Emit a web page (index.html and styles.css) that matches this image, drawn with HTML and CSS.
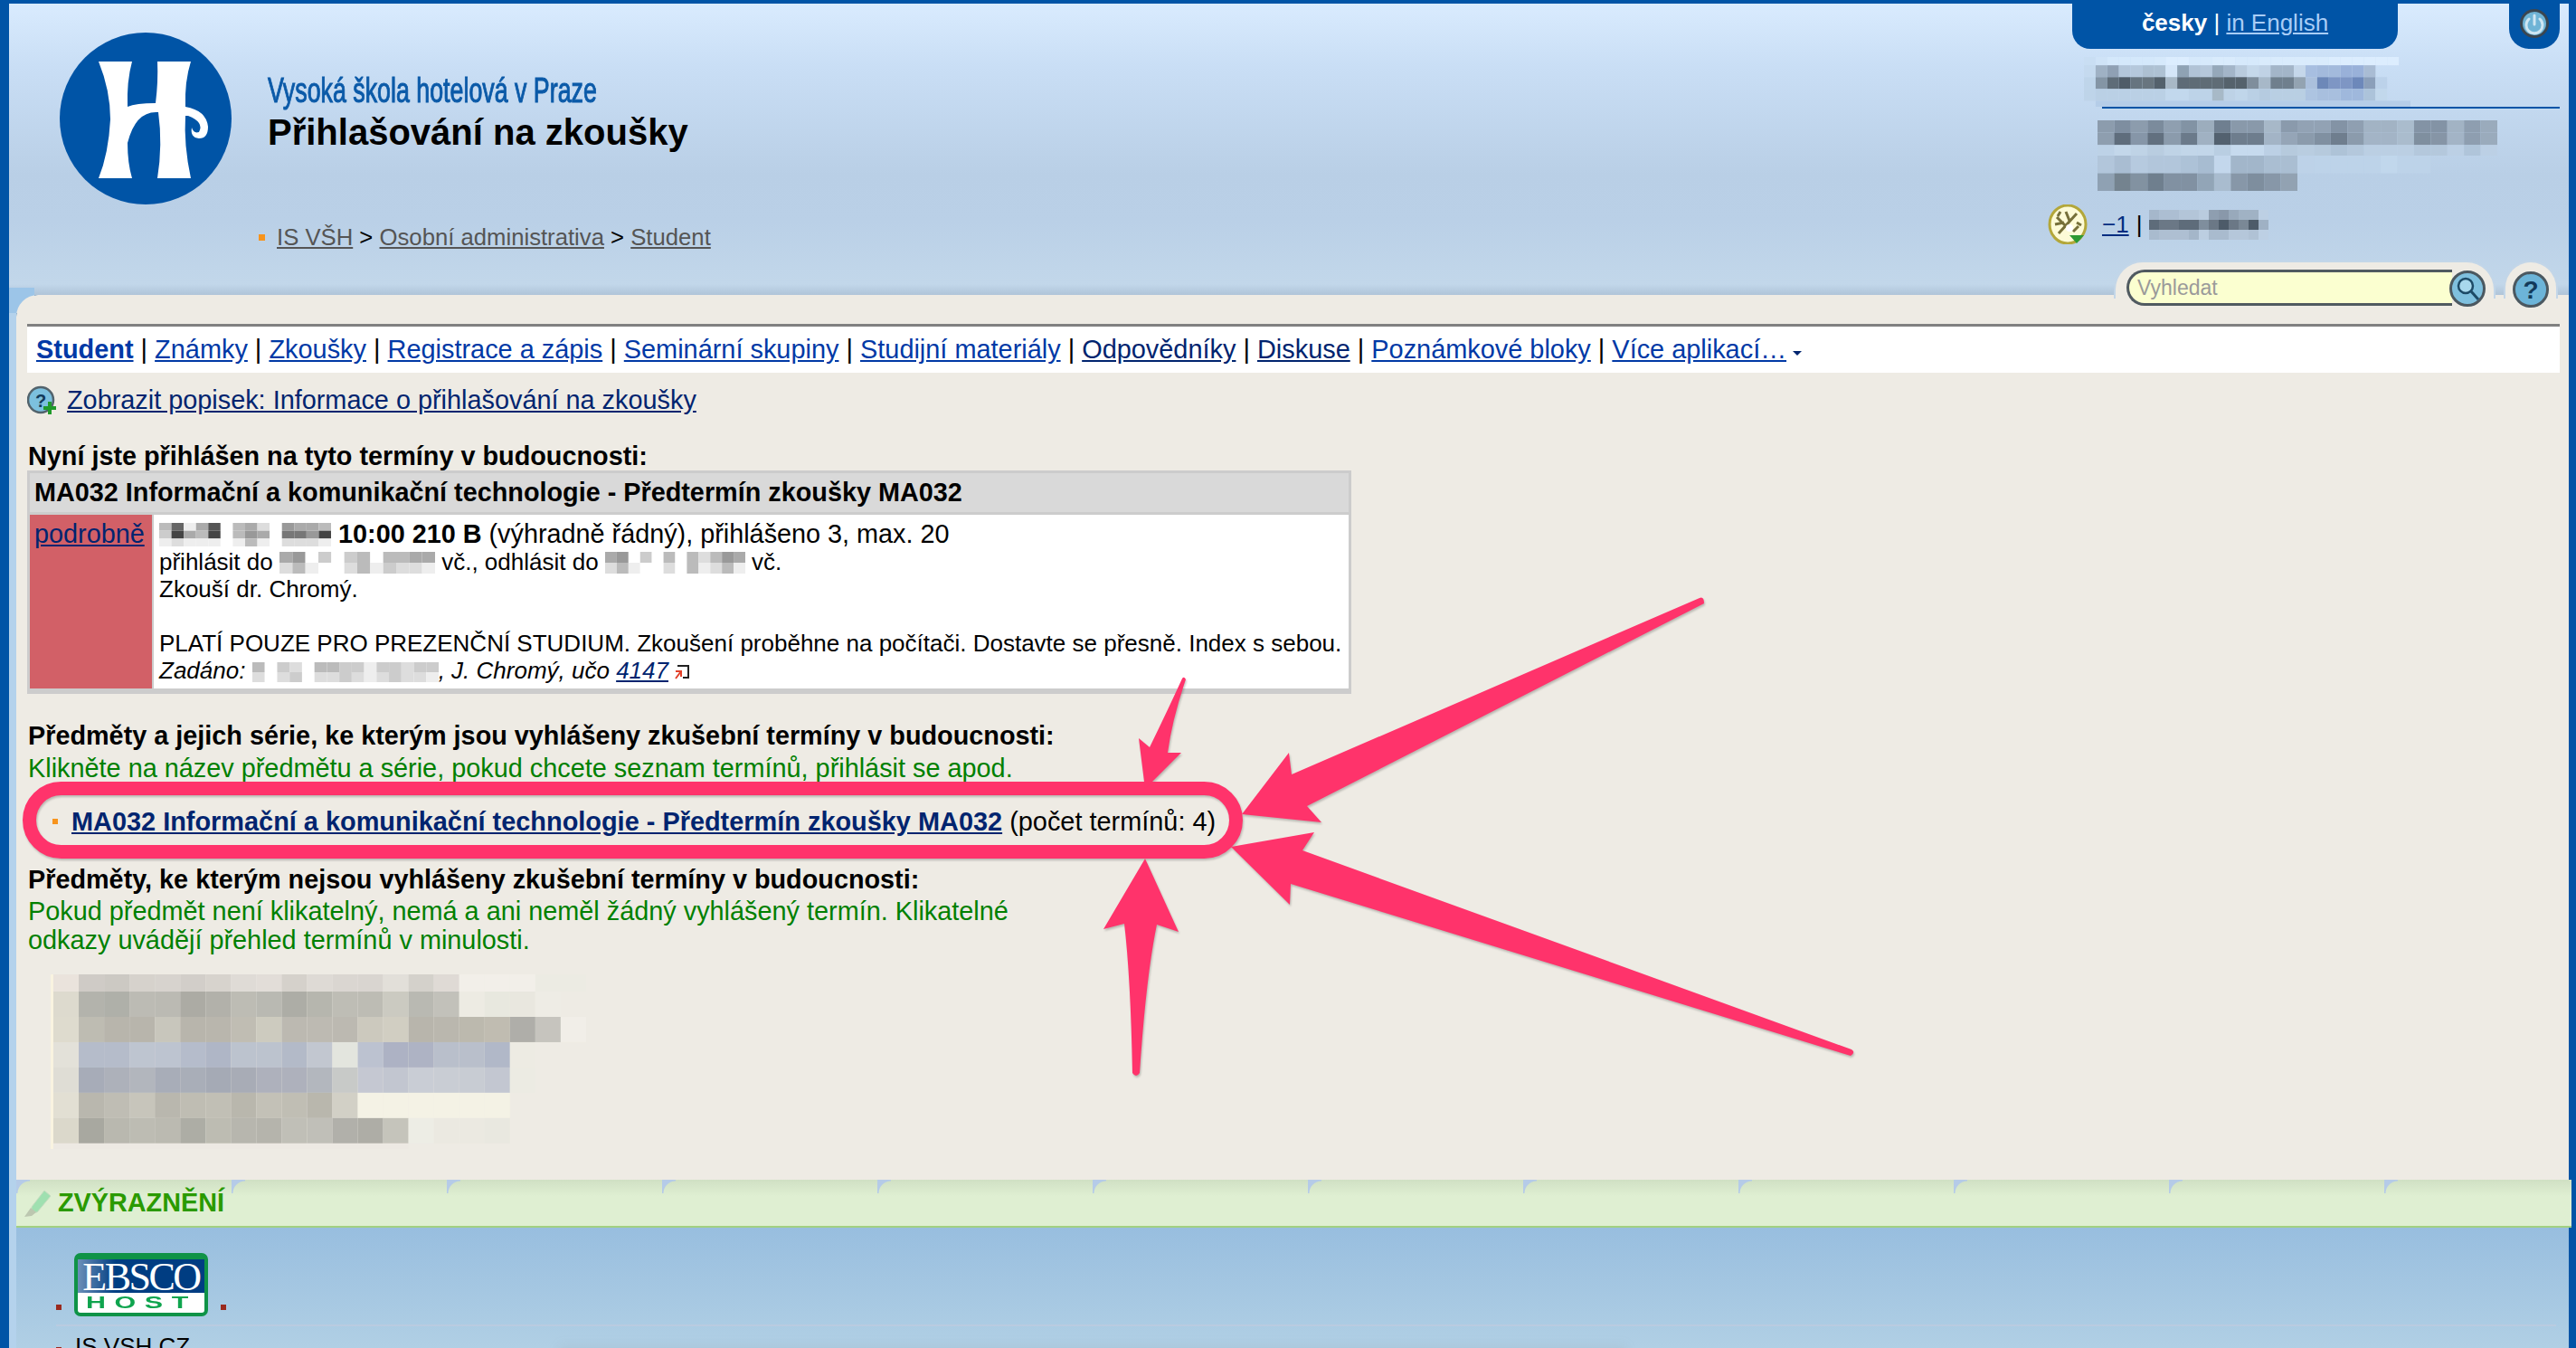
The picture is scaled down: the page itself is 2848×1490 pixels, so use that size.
FILE: index.html
```html
<!DOCTYPE html>
<html lang="cs">
<head>
<meta charset="utf-8">
<title>Přihlašování na zkoušky</title>
<link rel="stylesheet" href="styles.css">
</head>
<body>
<div class="frame">
  <header class="header">
    <div class="brand">
      <svg class="logo" viewBox="66 36 190 190"><ellipse cx="161" cy="131" rx="95" ry="95" fill="#0054a6"/><path fill="#fff" d="M109 68H146Q140 90 141 118Q150 114 172 114Q175 90 174 68H211Q204 90 205 118Q228 122 230 140Q230 153 220 153Q210 152 212 141Q214 148 220 146Q226 135 208 128L205 128Q203 160 211 197H174Q180 160 175 124Q150 122 141 158Q141 180 146 197H109Q120 170 122 132Q122 100 109 68Z"/></svg>
      <div class="brand-text">
        <div class="school"><span class="school-name">Vysoká škola hotelová v Praze</span></div>
        <h1 class="title">Přihlašování na zkoušky</h1>
        <div class="crumbs"><i class="crumb-dot"></i><a href="#">IS VŠH</a> &gt; <a href="#">Osobní administrativa</a> &gt; <a href="#">Student</a></div>
      </div>
    </div>
    <div class="aside">
      <div class="tabs">
        <div class="lang"><b>česky</b> | <a href="#">in English</a></div>
        <div class="power"><svg width="32" height="32" viewBox="0 0 32 32"><circle cx="16" cy="16" r="14.5" fill="#6fb4d6" stroke="#3b4650" stroke-width="3"/><path d="M10 11a9 9 0 1 0 12 0M16 7v10" fill="none" stroke="#cfe6f2" stroke-width="3" stroke-linecap="round"/></svg></div>
      </div>
      <svg class="mosaic m-user" viewBox="0 0 28 4.2" preserveAspectRatio="none">
        <g transform="translate(0,0) scale(1,.7)"><rect x="0" fill="#c9def3"/><rect x="1" fill="#cfe3f7"/><rect x="2" fill="#d4e8fb"/><rect x="3" fill="#d4e8fb"/><rect x="4" fill="#d4e8fb"/><rect x="5" fill="#d4e8fb"/><rect x="6" fill="#d6e9fb"/><rect x="7" fill="#dcedfe"/><rect x="8" fill="#dcedfe"/><rect x="9" fill="#d6e9fb"/><rect x="10" fill="#d6e9fb"/><rect x="11" fill="#d9ebfc"/><rect x="12" fill="#d9ebfc"/><rect x="13" fill="#d6e9fb"/><rect x="14" fill="#d6e9fb"/><rect x="15" fill="#d9ebfc"/><rect x="16" fill="#d9ebfc"/><rect x="17" fill="#d9ebfc"/><rect x="18" fill="#d9ebfc"/><rect x="19" fill="#d9ebfc"/><rect x="20" fill="#d9ebfc"/><rect x="21" fill="#dcedfe"/><rect x="22" fill="#dcedfe"/><rect x="23" fill="#dcedfe"/><rect x="24" fill="#dcedfe"/><rect x="25" fill="#dcedfe"/><rect x="26" fill="#dcedfe"/></g>
        <g transform="translate(0,.7)"><rect x="0" fill="#c5daef"/><rect x="1" fill="#9fb1c4"/><rect x="2" fill="#8fa0b4"/><rect x="3" fill="#b3c6da"/><rect x="4" fill="#b5c8dc"/><rect x="5" fill="#adc0d2"/><rect x="6" fill="#aec1d3"/><rect x="7" fill="#d5e6f8"/><rect x="8" fill="#8fa2b4"/><rect x="9" fill="#b1c3d6"/><rect x="10" fill="#b5c7da"/><rect x="11" fill="#95a8ba"/><rect x="12" fill="#a3b5c8"/><rect x="13" fill="#b9cbdd"/><rect x="14" fill="#c5d8ea"/><rect x="15" fill="#c0d2e5"/><rect x="16" fill="#a3b5c8"/><rect x="17" fill="#a3b5c8"/><rect x="18" fill="#c5d7ea"/><rect x="19" fill="#a7bee0"/><rect x="20" fill="#a3badc"/><rect x="21" fill="#a3badc"/><rect x="22" fill="#99b1d9"/><rect x="23" fill="#99b1d9"/><rect x="24" fill="#a9bcd4"/></g>
        <g transform="translate(0,1.7)"><rect x="0" fill="#bfd5ea"/><rect x="1" fill="#8495a5"/><rect x="2" fill="#5e6c78"/><rect x="3" fill="#4f5c68"/><rect x="4" fill="#66747f"/><rect x="5" fill="#68757f"/><rect x="6" fill="#54616c"/><rect x="7" fill="#a8b8c6"/><rect x="8" fill="#5e6b77"/><rect x="9" fill="#5f6c76"/><rect x="10" fill="#5f6c76"/><rect x="11" fill="#5f6c76"/><rect x="12" fill="#55626c"/><rect x="13" fill="#55626c"/><rect x="14" fill="#7f8e9c"/><rect x="15" fill="#a7b8c8"/><rect x="16" fill="#6f7f8d"/><rect x="17" fill="#6f7f8d"/><rect x="18" fill="#93a3b1"/><rect x="19" fill="#abc0dc"/><rect x="20" fill="#6d88b8"/><rect x="21" fill="#7e96c4"/><rect x="22" fill="#7e96c4"/><rect x="23" fill="#6d88ba"/><rect x="24" fill="#8b9fba"/><rect x="25" fill="#bcd2ea"/></g>
        <g transform="translate(0,2.7)"><rect x="0" fill="#bed4e9"/><rect x="1" fill="#bad0e5"/><rect x="2" fill="#bad0e5"/><rect x="3" fill="#bad0e5"/><rect x="4" fill="#bad0e5"/><rect x="5" fill="#bad0e5"/><rect x="6" fill="#bad0e5"/><rect x="7" fill="#c2d8ed"/><rect x="8" fill="#c2d8ed"/><rect x="9" fill="#bdd3e8"/><rect x="10" fill="#bdd3e8"/><rect x="11" fill="#a7b9c7"/><rect x="12" fill="#bdd2e6"/><rect x="13" fill="#c0d6ea"/><rect x="14" fill="#bad0e5"/><rect x="15" fill="#b5cbe0"/><rect x="16" fill="#b9cfe3"/><rect x="17" fill="#b9cfe3"/><rect x="18" fill="#b9cfe3"/><rect x="19" fill="#adc4e1"/><rect x="20" fill="#a8bfde"/><rect x="21" fill="#a8bfde"/><rect x="22" fill="#9fb8dc"/><rect x="23" fill="#9fb8dc"/><rect x="24" fill="#acc3da"/><rect x="25" fill="#c2d8ec"/></g>
        <g transform="translate(1,3.7) scale(27,.5)"><rect x="0" fill="#b5cde8"/></g>
      </svg>
      <div class="rule"></div>
      <svg class="mosaic m-study" viewBox="0 0 24 4" preserveAspectRatio="none">
        <g transform="scale(1,.7)"><rect x="0" fill="#8c9cad"/><rect x="1" fill="#7e8ea0"/><rect x="2" fill="#8c9cad"/><rect x="3" fill="#7b8b9c"/><rect x="4" fill="#8f9fb0"/><rect x="5" fill="#8293a4"/><rect x="6" fill="#9cadbd"/><rect x="7" fill="#6f7f90"/><rect x="8" fill="#8999aa"/><rect x="9" fill="#8999aa"/><rect x="10" fill="#a7b8c8"/><rect x="11" fill="#8a9aac"/><rect x="12" fill="#92a2b4"/><rect x="13" fill="#92a2b4"/><rect x="14" fill="#8393a5"/><rect x="15" fill="#8f9fb1"/><rect x="16" fill="#a2b3c4"/><rect x="17" fill="#a2b3c4"/><rect x="18" fill="#aabccd"/><rect x="19" fill="#8393a5"/><rect x="20" fill="#8393a5"/><rect x="21" fill="#a2b3c4"/><rect x="22" fill="#8e9eb0"/><rect x="23" fill="#9aabbc"/></g>
        <g transform="translate(0,.7) scale(1,.7)"><rect x="0" fill="#8e9eaf"/><rect x="1" fill="#5f6d7c"/><rect x="2" fill="#8696a8"/><rect x="3" fill="#62707f"/><rect x="4" fill="#8b9bac"/><rect x="5" fill="#6b7a8a"/><rect x="6" fill="#a0b1c2"/><rect x="7" fill="#53616f"/><rect x="8" fill="#6e7d8d"/><rect x="9" fill="#6e7d8d"/><rect x="10" fill="#a3b4c6"/><rect x="11" fill="#95a5b7"/><rect x="12" fill="#8b9bac"/><rect x="13" fill="#8090a1"/><rect x="14" fill="#6f7e8e"/><rect x="15" fill="#8b9bac"/><rect x="16" fill="#a3b4c6"/><rect x="17" fill="#a3b4c6"/><rect x="18" fill="#aabccd"/><rect x="19" fill="#7f8f9f"/><rect x="20" fill="#8695a6"/><rect x="21" fill="#a3b4c6"/><rect x="22" fill="#8e9eb0"/><rect x="23" fill="#9aabbc"/></g>
        <g transform="translate(0,1.4) scale(1,.6)"><rect x="0" fill="#bdd2e7"/><rect x="1" fill="#c3d7ea"/><rect x="2" fill="#bfd3e6"/><rect x="3" fill="#b9cde0"/><rect x="4" fill="#bfd3e6"/><rect x="5" fill="#c2d6e9"/><rect x="6" fill="#c2d6e9"/><rect x="7" fill="#b9cee2"/><rect x="8" fill="#c6daee"/><rect x="9" fill="#c6daee"/><rect x="10" fill="#bcd0e5"/><rect x="11" fill="#b6cadd"/><rect x="12" fill="#b9cde0"/><rect x="13" fill="#b6cadd"/><rect x="14" fill="#aec3d7"/><rect x="15" fill="#b4c8dc"/><rect x="16" fill="#bbcfe3"/><rect x="17" fill="#bbcfe3"/><rect x="18" fill="#bbcfe3"/><rect x="19" fill="#b4c8dc"/><rect x="20" fill="#b4c8dc"/><rect x="21" fill="#bcd0e5"/><rect x="22" fill="#b0c5da"/><rect x="23" fill="#bcd0e5"/></g>
        <g transform="translate(0,2)"><rect x="0" fill="#b2c6db"/><rect x="1" fill="#a9bdd2"/><rect x="2" fill="#b6cadf"/><rect x="3" fill="#b2c6db"/><rect x="4" fill="#b2c6db"/><rect x="5" fill="#adc2d7"/><rect x="6" fill="#a7bcd1"/><rect x="7" fill="#c3d7ec"/><rect x="8" fill="#a2b6ca"/><rect x="9" fill="#a2b6ca"/><rect x="10" fill="#aabed2"/><rect x="11" fill="#aabed2"/><rect x="12" fill="#bdd2e8"/><rect x="13" fill="#bdd3e9"/><rect x="14" fill="#bdd3e9"/><rect x="15" fill="#bdd3e9"/><rect x="16" fill="#bdd3e9"/><rect x="17" fill="#c1d7ec"/><rect x="18" fill="#bdd3e9"/><rect x="19" fill="#bdd3e9"/></g>
        <g transform="translate(0,3)"><rect x="0" fill="#8fa1b3"/><rect x="1" fill="#74838f"/><rect x="2" fill="#8292a1"/><rect x="3" fill="#6f7f8e"/><rect x="4" fill="#8191a2"/><rect x="5" fill="#8191a2"/><rect x="6" fill="#92a5b7"/><rect x="7" fill="#a9bccf"/><rect x="8" fill="#8797a8"/><rect x="9" fill="#7e8e9e"/><rect x="10" fill="#8797a8"/><rect x="11" fill="#92a2b2"/></g>
      </svg>
      <div class="notice">
        <svg class="term-icon" width="44" height="44" viewBox="0 0 44 44"><ellipse cx="22" cy="22" rx="20" ry="21" fill="#fdfbd7" stroke="#b3a73a" stroke-width="3"/><path d="M12 32 32 10M10 14l10 10M20 8l4 10M8 22l10-2M28 30l6-6M14 8l-3 5M32 20l5 3" stroke="#76703a" stroke-width="3" fill="none"/><circle cx="24" cy="26" r="4" fill="#fff"/><path d="M24 34h16l-8 9z" fill="#2d9a32"/></svg>
        <a href="#">−1</a><span class="pipe">|</span>
        <svg class="mosaic m-user2" viewBox="0 0 12 3" preserveAspectRatio="none">
          <g><rect x="0" fill="#a5b7cb"/><rect x="1" fill="#acbed2"/><rect x="2" fill="#acbed2"/><rect x="3" fill="#b3c5d8"/><rect x="4" fill="#b3c5d8"/><rect x="5" fill="#b9cbde"/><rect x="6" fill="#8e9eb0"/><rect x="7" fill="#8998aa"/><rect x="8" fill="#98a9bb"/><rect x="9" fill="#a0b2c4"/><rect x="10" fill="#a0b2c4"/><rect x="11" fill="#bdd0e4"/></g>
          <g transform="translate(0,1)"><rect x="0" fill="#5e6c7a"/><rect x="1" fill="#6b7886"/><rect x="2" fill="#6b7886"/><rect x="3" fill="#5e6c7a"/><rect x="4" fill="#5e6c7a"/><rect x="5" fill="#7f8e9d"/><rect x="6" fill="#6b7886"/><rect x="7" fill="#4d5b69"/><rect x="8" fill="#6b7886"/><rect x="9" fill="#7a8896"/><rect x="10" fill="#4d5b69"/><rect x="11" fill="#9fb1c4"/></g>
          <g transform="translate(0,2)"><rect x="0" fill="#a9bbce"/><rect x="1" fill="#aebfd2"/><rect x="2" fill="#aebfd2"/><rect x="3" fill="#aebfd2"/><rect x="4" fill="#a4b6c9"/><rect x="5" fill="#bccee1"/><rect x="6" fill="#a9bbce"/><rect x="7" fill="#a9bbce"/><rect x="8" fill="#b5c7da"/><rect x="9" fill="#b5c7da"/><rect x="10" fill="#b0c2d5"/><rect x="11" fill="#bdd0e4"/></g>
        </svg>
      </div>
    </div>
  </header>

  <div class="panel-shell">
  <main class="panel">
    <div class="tools">
      <div class="search-tab">
        <div class="search-box">Vyhledat</div>
        <svg class="round-btn" width="40" height="40" viewBox="0 0 40 40"><circle cx="20" cy="20" r="18.5" fill="#7fc0de" stroke="#4b5860" stroke-width="3"/><circle cx="18" cy="17" r="8" fill="#a8d8ec" stroke="#1d4a66" stroke-width="2.5"/><path d="M24 23l8 9" stroke="#1d4a66" stroke-width="3"/></svg>
      </div>
      <div class="help-tab"><svg width="40" height="40" viewBox="0 0 40 40"><circle cx="20" cy="20" r="18.5" fill="#6cb4d8" stroke="#4b5860" stroke-width="3"/><text x="20" y="30" class="help-q">?</text></svg></div>
    </div>
    <nav class="nav">
      <a href="#"><b>Student</b></a> | <a href="#">Známky</a> | <a href="#">Zkoušky</a> | <a href="#">Registrace a zápis</a> | <a href="#">Seminární skupiny</a> | <a href="#">Studijní materiály</a> | <a class="dark" href="#">Odpovědníky</a> | <a class="dark" href="#">Diskuse</a> | <a href="#">Poznámkové bloky</a> | <a href="#">Více aplikací…</a><i class="caret"></i>
    </nav>
    <div class="show-help">
      <svg width="32" height="32" viewBox="0 0 32 32"><circle cx="15" cy="16" r="14" fill="#7cc0de" stroke="#52636c" stroke-width="2.5"/><text x="15" y="24" class="help-q small">?</text><path d="M25 18v14M18 25h14" stroke="#1f9a2a" stroke-width="4"/></svg>
      <a href="#">Zobrazit popisek: Informace o přihlašování na zkoušky</a>
    </div>

    <h2 class="h-first">Nyní jste přihlášen na tyto termíny v budoucnosti:</h2>
    <div class="exam">
      <div class="exam-head">MA032 Informační a komunikační technologie - Předtermín zkoušky MA032</div>
      <div class="exam-row">
        <div class="exam-side"><a href="#">podrobně</a></div>
        <div class="exam-body">
          <div class="line-big"><svg class="mosaic blur-date" viewBox="0 0 14 3" preserveAspectRatio="none">
            <g><rect x="0" fill="#bbb"/><rect x="1" fill="#666"/><rect x="2" fill="#eee"/><rect x="3" fill="#aaa"/><rect x="4" fill="#555"/><rect x="5" fill="#fff"/><rect x="6" fill="#bbb"/><rect x="7" fill="#aaa"/><rect x="8" fill="#ddd"/><rect x="9" fill="#fff"/><rect x="10" fill="#999"/><rect x="11" fill="#aaa"/><rect x="12" fill="#aaa"/><rect x="13" fill="#bbb"/></g>
            <g transform="translate(0,1)"><rect x="0" fill="#ccc"/><rect x="1" fill="#444"/><rect x="2" fill="#aaa"/><rect x="3" fill="#bbb"/><rect x="4" fill="#444"/><rect x="5" fill="#fff"/><rect x="6" fill="#bbb"/><rect x="7" fill="#999"/><rect x="8" fill="#aaa"/><rect x="9" fill="#fff"/><rect x="10" fill="#777"/><rect x="11" fill="#777"/><rect x="12" fill="#999"/><rect x="13" fill="#444"/></g>
            <g transform="translate(0,2)"><rect x="0" fill="#eee"/><rect x="1" fill="#ddd"/><rect x="2" fill="#eee"/><rect x="3" fill="#eee"/><rect x="4" fill="#eee"/><rect x="5" fill="#fff"/><rect x="6" fill="#eee"/><rect x="7" fill="#bbb"/><rect x="8" fill="#eee"/><rect x="9" fill="#fff"/><rect x="10" fill="#ddd"/><rect x="11" fill="#ddd"/><rect x="12" fill="#ddd"/><rect x="13" fill="#eee"/></g>
          </svg> <b>10:00 210 B</b> (výhradně řádný), přihlášeno 3, max. 20</div>
          <div>přihlásit do <svg class="mosaic blur-small" viewBox="0 0 12 2" preserveAspectRatio="none">
            <g><rect x="0" fill="#aaa"/><rect x="1" fill="#999"/><rect x="2" fill="#fff"/><rect x="3" fill="#ccc"/><rect x="4" fill="#fff"/><rect x="5" fill="#ccc"/><rect x="6" fill="#bbb"/><rect x="7" fill="#fff"/><rect x="8" fill="#bbb"/><rect x="9" fill="#bbb"/><rect x="10" fill="#aaa"/><rect x="11" fill="#aaa"/></g>
            <g transform="translate(0,1)"><rect x="0" fill="#ddd"/><rect x="1" fill="#bbb"/><rect x="2" fill="#eee"/><rect x="3" fill="#fff"/><rect x="4" fill="#fff"/><rect x="5" fill="#ddd"/><rect x="6" fill="#bbb"/><rect x="7" fill="#eee"/><rect x="8" fill="#ccc"/><rect x="9" fill="#ddd"/><rect x="10" fill="#ddd"/><rect x="11" fill="#eee"/></g>
          </svg> vč., odhlásit do <svg class="mosaic blur-small2" viewBox="0 0 12 2" preserveAspectRatio="none">
            <g><rect x="0" fill="#aaa"/><rect x="1" fill="#999"/><rect x="2" fill="#fff"/><rect x="3" fill="#ccc"/><rect x="4" fill="#fff"/><rect x="5" fill="#bbb"/><rect x="6" fill="#fff"/><rect x="7" fill="#bbb"/><rect x="8" fill="#ddd"/><rect x="9" fill="#bbb"/><rect x="10" fill="#999"/><rect x="11" fill="#aaa"/></g>
            <g transform="translate(0,1)"><rect x="0" fill="#ddd"/><rect x="1" fill="#bbb"/><rect x="2" fill="#eee"/><rect x="3" fill="#fff"/><rect x="4" fill="#fff"/><rect x="5" fill="#ddd"/><rect x="6" fill="#fff"/><rect x="7" fill="#bbb"/><rect x="8" fill="#eee"/><rect x="9" fill="#ddd"/><rect x="10" fill="#bbb"/><rect x="11" fill="#eee"/></g>
          </svg> vč.</div>
          <div>Zkouší dr. Chromý.</div>
          <div class="blank"></div>
          <div>PLATÍ POUZE PRO PREZENČNÍ STUDIUM. Zkoušení proběhne na počítači. Dostavte se přesně. Index s sebou.</div>
          <div class="assigned"><i>Zadáno: <svg class="mosaic blur-zad" viewBox="0 0 15 2" preserveAspectRatio="none">
            <g><rect x="0" fill="#bbb"/><rect x="1" fill="#fff"/><rect x="2" fill="#ccc"/><rect x="3" fill="#ddd"/><rect x="4" fill="#fff"/><rect x="5" fill="#bbb"/><rect x="6" fill="#bbb"/><rect x="7" fill="#ccc"/><rect x="8" fill="#ccc"/><rect x="9" fill="#eee"/><rect x="10" fill="#ccc"/><rect x="11" fill="#ccc"/><rect x="12" fill="#ddd"/><rect x="13" fill="#ccc"/><rect x="14" fill="#ccc"/></g>
            <g transform="translate(0,1)"><rect x="0" fill="#ddd"/><rect x="1" fill="#fff"/><rect x="2" fill="#ddd"/><rect x="3" fill="#ccc"/><rect x="4" fill="#fff"/><rect x="5" fill="#ddd"/><rect x="6" fill="#ddd"/><rect x="7" fill="#ccc"/><rect x="8" fill="#ddd"/><rect x="9" fill="#eee"/><rect x="10" fill="#ddd"/><rect x="11" fill="#ccc"/><rect x="12" fill="#ddd"/><rect x="13" fill="#ddd"/><rect x="14" fill="#eee"/></g>
          </svg>, J. Chromý, učo <a href="#">4147</a></i> <svg class="ext" width="18" height="17" viewBox="0 0 18 17"><path d="M3 1h12v13H9" fill="none" stroke="#222" stroke-width="2"/><path d="M1 7l6 0 0 6M7 7l-6 8" fill="none" stroke="#e2412a" stroke-width="2"/></svg></div>
        </div>
      </div>
    </div>

    <h2 class="h-second">Předměty a jejich série, ke kterým jsou vyhlášeny zkušební termíny v budoucnosti:</h2>
    <p class="hint hint-open">Klikněte na název předmětu a série, pokud chcete seznam termínů, přihlásit se apod.</p>
    <div class="course"><i class="course-dot"></i><a href="#"><b>MA032 Informační a komunikační technologie - Předtermín zkoušky MA032</b></a> (počet termínů: 4)</div>
    <h2 class="h-third">Předměty, ke kterým nejsou vyhlášeny zkušební termíny v budoucnosti:</h2>
    <p class="hint hint-closed">Pokud předmět není klikatelný, nemá a ani neměl žádný vyhlášený termín. Klikatelné<br>odkazy uvádějí přehled termínů v minulosti.</p>

    <svg class="mosaic m-courses" viewBox="0 0 22 6.9" preserveAspectRatio="none">
      <g transform="scale(1,.68)"><rect x="0" fill="#eae3dc"/><rect x="1" fill="#cfcbc6"/><rect x="2" fill="#ccc9c3"/><rect x="3" fill="#d6d2cc"/><rect x="4" fill="#d7d3ce"/><rect x="5" fill="#d2cec9"/><rect x="6" fill="#d7d3cd"/><rect x="7" fill="#dfdbd6"/><rect x="8" fill="#e2ddd8"/><rect x="9" fill="#d5d1cb"/><rect x="10" fill="#dedad5"/><rect x="11" fill="#dad6d1"/><rect x="12" fill="#d9d5d0"/><rect x="13" fill="#e2dfd9"/><rect x="14" fill="#d4d1cb"/><rect x="15" fill="#dfdad5"/><rect x="16" fill="#f2efe9"/><rect x="17" fill="#f2efe9"/><rect x="18" fill="#f2efe9"/><rect x="19" fill="#ecebe3"/><rect x="20" fill="#ecebe3"/></g>
      <g transform="translate(0,.68)"><rect x="0" fill="#dddace"/><rect x="1" fill="#b3b3ac"/><rect x="2" fill="#afb0a9"/><rect x="3" fill="#bcbbb4"/><rect x="4" fill="#bbbab3"/><rect x="5" fill="#acaba4"/><rect x="6" fill="#b2b1aa"/><rect x="7" fill="#bdbcb4"/><rect x="8" fill="#b9b9b2"/><rect x="9" fill="#adada6"/><rect x="10" fill="#b6b6ae"/><rect x="11" fill="#bebdb5"/><rect x="12" fill="#bdbcb4"/><rect x="13" fill="#cbcac1"/><rect x="14" fill="#b9b9b2"/><rect x="15" fill="#c2c1ba"/><rect x="16" fill="#edebe3"/><rect x="17" fill="#e8e8df"/><rect x="18" fill="#e9e7df"/><rect x="19" fill="#eeece5"/></g>
      <g transform="translate(0,1.68)"><rect x="0" fill="#dedbce"/><rect x="1" fill="#bebcb2"/><rect x="2" fill="#b8b5ac"/><rect x="3" fill="#b8b5ac"/><rect x="4" fill="#c8c6bc"/><rect x="5" fill="#b8b5ac"/><rect x="6" fill="#b9b6ad"/><rect x="7" fill="#c0bdb3"/><rect x="8" fill="#cdcbbf"/><rect x="9" fill="#bcb9b1"/><rect x="10" fill="#bdbab2"/><rect x="11" fill="#bcb9b1"/><rect x="12" fill="#ccc9be"/><rect x="13" fill="#d1cec2"/><rect x="14" fill="#b8b5ac"/><rect x="15" fill="#bab7ae"/><rect x="16" fill="#bcb9ae"/><rect x="17" fill="#c0bcb1"/><rect x="18" fill="#afaea9"/><rect x="19" fill="#c6c4be"/><rect x="20" fill="#f1eee8"/></g>
      <g transform="translate(0,2.68)"><rect x="0" fill="#e3e1d9"/><rect x="1" fill="#b5bcca"/><rect x="2" fill="#b5bcca"/><rect x="3" fill="#bec5d0"/><rect x="4" fill="#bdc4d0"/><rect x="5" fill="#b5bccb"/><rect x="6" fill="#afb6c6"/><rect x="7" fill="#bcc3ce"/><rect x="8" fill="#bcc3ce"/><rect x="9" fill="#b3bac8"/><rect x="10" fill="#c2c7d0"/><rect x="11" fill="#e3e5de"/><rect x="12" fill="#bcc2d0"/><rect x="13" fill="#adb2c4"/><rect x="14" fill="#aeb3c4"/><rect x="15" fill="#b9bfcb"/><rect x="16" fill="#b9bfcb"/><rect x="17" fill="#b1b8c8"/><rect x="18" fill="#edebe3"/></g>
      <g transform="translate(0,3.68)"><rect x="0" fill="#dfddd5"/><rect x="1" fill="#a7acb8"/><rect x="2" fill="#adb1ba"/><rect x="3" fill="#b2b6bd"/><rect x="4" fill="#a8adb8"/><rect x="5" fill="#a9aeb8"/><rect x="6" fill="#a5aab5"/><rect x="7" fill="#a8acb6"/><rect x="8" fill="#aeb1bc"/><rect x="9" fill="#aeb1bc"/><rect x="10" fill="#b3b7be"/><rect x="11" fill="#c8cac8"/><rect x="12" fill="#c5c8d2"/><rect x="13" fill="#c2c6d0"/><rect x="14" fill="#c9cdd5"/><rect x="15" fill="#c9cdd4"/><rect x="16" fill="#c8ccd3"/><rect x="17" fill="#c3c7d1"/><rect x="18" fill="#ecebe3"/></g>
      <g transform="translate(0,4.68)"><rect x="0" fill="#e2dfd3"/><rect x="1" fill="#b9b7ae"/><rect x="2" fill="#bfbdb4"/><rect x="3" fill="#c7c5bb"/><rect x="4" fill="#b9b7ae"/><rect x="5" fill="#bfbdb3"/><rect x="6" fill="#c1bfb5"/><rect x="7" fill="#b9b7ad"/><rect x="8" fill="#c3c1b7"/><rect x="9" fill="#c0beb4"/><rect x="10" fill="#b9b7ad"/><rect x="11" fill="#d2d0c6"/><rect x="12" fill="#f4f2e5"/><rect x="13" fill="#f4f2e5"/><rect x="14" fill="#f4f2e5"/><rect x="15" fill="#f4f2e5"/><rect x="16" fill="#f4f2e5"/><rect x="17" fill="#f4f2e5"/></g>
      <g transform="translate(0,5.68)"><rect x="0" fill="#dbd8cb"/><rect x="1" fill="#a8a8a0"/><rect x="2" fill="#b9b8af"/><rect x="3" fill="#bdbcb3"/><rect x="4" fill="#bbbab1"/><rect x="5" fill="#adada5"/><rect x="6" fill="#bdbcb2"/><rect x="7" fill="#b7b6ae"/><rect x="8" fill="#b5b4ac"/><rect x="9" fill="#c0bfb7"/><rect x="10" fill="#c0bfb8"/><rect x="11" fill="#b1b0aa"/><rect x="12" fill="#aeada6"/><rect x="13" fill="#c5c4bb"/><rect x="14" fill="#edede5"/><rect x="15" fill="#ebe9e1"/><rect x="16" fill="#ebe9e1"/><rect x="17" fill="#e9e8e0"/></g>
      <g transform="translate(0,6.68) scale(14,.22)"><rect x="0" fill="#ede9e3"/></g>
    </svg>
  </main>
  </div>

  <section class="highlights">
    <div class="notches"><i></i><i></i><i></i><i></i><i></i><i></i><i></i><i></i><i></i><i></i><i></i><i></i></div>
    <svg class="pen" width="32" height="32" viewBox="0 0 32 32"><path d="M10 20 24 2l7 6-15 18-6 0z" fill="#9fe0b0" stroke="#c5dcc0"/><path d="M9 21l6 5-5 4-8 1z" fill="#bcc7b0"/></svg>
    <span>ZVÝRAZNĚNÍ</span>
  </section>

  <footer class="footer">
    <div class="foot-row first">
      <i class="bullet"></i>
      <div class="ebsco"><div class="ebsco-top">EBSCO</div><div class="ebsco-bottom">HOST</div></div>
      <i class="bullet"></i>
    </div>
    <div class="foot-row second"><i class="bullet"></i><span>IS VSH CZ</span></div>
    <div class="foot-shade"></div>
  </footer>
</div>

<svg class="annotations" width="2848" height="1490" viewBox="0 0 2848 1490">
  <rect x="32.5" y="871.5" width="1334" height="70" rx="35" ry="35" fill="none" stroke="#ff336b" stroke-width="15"/>
  <path fill="#ff336b" d="M1307 750Q1309 747 1311 751Q1296 795 1291 832L1306 832 1266 872 1259 816 1271 826Q1291 785 1307 750Z"/>
  <path fill="#ff336b" d="M1879 661Q1884 659 1884 667L1445 891 1461 909 1373 900 1425 832 1428 856Z"/>
  <path fill="#ff336b" d="M2047 1160Q2052 1163 2046 1167L1427 977 1426 1000 1361 936 1453 920 1440 940Z"/>
  <path fill="#ff336b" d="M1266 949 1303 1030 1279 1022Q1267 1080 1260 1186 1256 1192 1252 1186 1250 1080 1243 1021L1220 1027Z"/>
</svg>
</body>
</html>
```

FILE: styles.css
```css
* { box-sizing: border-box; }
html, body { margin: 0; height: 100%; overflow: hidden; }
body { background: #0054a6; font-family: "Liberation Sans", Arial, sans-serif; color: #000; position: relative; }
a { color: inherit; }
h1, h2, p { margin: 0; }

.frame {
  height: 1490px; padding: 4px 8px 0 10px;
  display: flex; flex-direction: column;
  background: linear-gradient(#b4d2ec, #b4d2ec) 10px 330px / 8px 100% no-repeat, #0054a6;
}

/* header */
.header {
  height: 322px; flex: none; display: flex; justify-content: space-between;
  background: linear-gradient(#d9ebfe 0, #c9def5 70px, #b9cfe6 190px, #bad0e7 240px, #c2d7ea 310px, #afc4d8 322px);
}
.brand { display: flex; padding: 32px 0 0 56px; gap: 40px; }
.logo { width: 190px; height: 190px; }
.brand-text { display: flex; flex-direction: column; padding-top: 44px; }
.school { height: 40px; line-height: 40px; }
.school-name { display: inline-block; font-family: "Liberation Sans", sans-serif; font-size: 38px; color: #0b5aa8; -webkit-text-stroke: 1px #0b5aa8; transform: scaleX(.705); transform-origin: 0 50%; white-space: nowrap; }
.title { font-size: 40px; line-height: 46px; font-weight: 700; margin-top: 3px; white-space: nowrap; }
.crumbs { margin-top: 77px; margin-left: -10px; font-size: 25.7px; line-height: 32px; display: flex; align-items: center; white-space: pre; }
.crumbs a { color: #555; }
.crumb-dot { width: 7px; height: 7px; background: #f7941d; margin-right: 13px; }

.aside { width: 560px; display: flex; flex-direction: column; }
.tabs { display: flex; padding-left: 11px; height: 50px; flex: none; }
.lang { width: 360px; height: 50px; background: #0054a6; border-radius: 0 0 20px 20px; color: #fff; font-size: 26px; line-height: 42px; text-align: center; }
.lang a { color: #a9cdf6; }
.power { width: 56px; height: 50px; margin-left: 123px; background: #0054a6; border-radius: 0 0 22px 22px; display: flex; justify-content: center; padding-top: 6px; }

.mosaic { display: block; }
.mosaic rect { width: 1px; height: 1px; }
.m-user { width: 361px; height: 55px; margin: 9px 0 0 24px; flex: none; }
.rule { height: 2px; background: #0054a6; margin: 0 10px 0 44px; flex: none; }
.m-study { width: 442px; height: 78px; margin: 13px 0 0 39px; flex: none; }
.notice { display: flex; align-items: center; margin: 15px 0 0 -16px; height: 44px; font-size: 26px; }
.term-icon { margin-right: 16px; flex: none; }
.notice a { color: #002c80; }
.pipe { margin: 0 8px; }
.m-user2 { width: 132px; height: 33px; }

/* panel */
.panel-shell {
  position: relative; flex: none; margin-top: -8px; padding: 8px 0 0 8px;
  background: linear-gradient(#9cc5e8, #9cc5e8) 0 0 / 28px 28px no-repeat;
}
.panel {
  position: relative; height: 978px;
  padding: 32px 10px 0 12px;
  background: #eeebe4; border-top-left-radius: 24px;
}
.tools { position: absolute; right: 12px; top: -38px; display: flex; gap: 9px; }
.search-tab { width: 422px; height: 42px; padding: 8px 12px 0 12px; display: flex; background: #eeebe4; border: 2px solid #c3d6e8; border-bottom: 0; border-radius: 32px 32px 0 0; }
.search-box { width: 360px; height: 40px; flex: none; background: #fbffd0; border: 3px solid #505a60; border-right: 0; border-radius: 20px 0 0 20px; font-size: 23px; line-height: 34px; color: #9a9a9a; padding-left: 9px; }
.round-btn { margin: 1px 0 0 -3px; flex: none; }
.help-tab { width: 60px; height: 42px; padding-top: 10px; display: flex; justify-content: center; background: #eeebe4; border: 2px solid #c3d6e8; border-bottom: 0; border-radius: 30px 30px 0 0; }
.help-q { font: 700 28px "Liberation Sans", sans-serif; fill: #123a5a; text-anchor: middle; }
.help-q.small { font-size: 20px; }

.nav { height: 54px; border-top: 3px solid #808080; background: #fff; padding-left: 10px; font-size: 28.9px; line-height: 50px; white-space: nowrap; color: #000; }
.nav a { color: #0039a6; }
.nav a.dark { color: #00246f; }
.caret { display: inline-block; border: 5px solid transparent; border-top: 5px solid #00246f; border-bottom: 0; margin: 0 0 3px 7px; }

.show-help { display: flex; align-items: center; gap: 12px; margin-top: 14px; height: 32px; font-size: 28.85px; line-height: 32px; }
.show-help a { color: #00246f; }
.h-first, .h-second, .h-third { font-size: 28.8px; line-height: 32px; font-weight: 700; }
.h-first { margin: 30px 0 0 1px; }
.exam { width: 1464px; border: 3px solid #ccc; border-bottom-width: 6px; background: #fff; }
.exam-head { height: 46px; padding-left: 5px; background: #d9d9d9; border-bottom: 3px solid #ccc; font-size: 28.8px; line-height: 42px; font-weight: 700; }
.exam-row { display: flex; height: 192px; }
.exam-side { width: 137px; flex: none; background: #d26067; padding: 5px 0 0 5px; border-right: 2px solid #ccc; font-size: 28.8px; line-height: 32px; }
.exam-side a { color: #00246f; }
.exam-body { padding: 6px 0 0 6px; font-size: 26px; line-height: 30px; white-space: nowrap; }
.exam-body div { height: 30px; }
.exam-body .line-big { font-size: 28.8px; line-height: 30px; height: 31px; }
.exam-body .mosaic { display: inline-block; vertical-align: -4px; }
.blur-date { width: 190px; height: 26px; }
.blur-small { width: 172px; height: 24px; }
.blur-small2 { width: 155px; height: 24px; }
.blur-zad { width: 206px; height: 22px; }
.assigned a { color: #00246f; }
.ext { vertical-align: -2px; }

.h-second { margin: 30px 0 0 1px; }
.hint { color: #008000; font-size: 28.85px; line-height: 32px; margin-left: 1px; }
.hint-open { margin-top: 4px; }
.hint-closed { margin-top: 3px; }
.course { display: flex; align-items: center; white-space: pre; margin: 27px 0 0 28px; font-size: 28.9px; line-height: 32px; height: 32px; }
.course a { color: #00246f; }
.course-dot { width: 6px; height: 6px; background: #f7941d; margin-right: 15px; flex: none; }
.h-third { margin: 32px 0 0 1px; }
.m-courses { width: 620px; height: 193px; margin: 22px 0 0 26px; border-left: 3px solid #f9f3e0; }

/* highlights */
.highlights {
  position: relative; height: 53px; flex: none; margin: 0 -3px 0 8px; padding-left: 7px;
  display: flex; align-items: center; gap: 7px;
  background: linear-gradient(#d0e0c4, #dfefd2 18px);
  border-bottom: 2px solid #a2d082;
  color: #2a9a00; font-size: 28.8px; font-weight: 700;
}
.notches { position: absolute; left: 0; top: 0; display: flex; }
.notches i { width: 238px; height: 15px; display: block; }
.notches i::before { content: ""; display: block; width: 15px; height: 15px; background: radial-gradient(circle at 100% 100%, transparent 13px, #b5cbe8 14px); }

/* footer */
.footer { position: relative; flex: 1; margin-left: 8px; padding: 29px 14px 0 44px; background: linear-gradient(#98bedf, #b3d1e5); }
.foot-row { display: flex; align-items: flex-end; }
.foot-row.first { height: 80px; border-bottom: 2px solid #b9cbe0; padding-bottom: 9px; gap: 14px; }
.foot-row .bullet { width: 6px; height: 6px; background: #9a2a1e; margin-bottom: 7px; flex: none; }
.foot-row.second { font-size: 26px; gap: 15px; margin-top: 6px; height: 32px; align-items: center; }
.foot-row.second .bullet { margin: 8px 0 0; }
.foot-shade { position: absolute; left: 600px; width: 1180px; bottom: 0; height: 20px; background: linear-gradient(transparent, rgba(120,130,135,.25)); filter: blur(6px); }
.ebsco { width: 148px; height: 70px; border-radius: 7px; background: #fff; border: 4px solid #0f9347; border-top-width: 7px; overflow: hidden; display: flex; flex-direction: column; align-items: center; }
.ebsco-top { width: 100%; height: 37px; flex: none; background: linear-gradient(90deg, #6b8fb8, #003d82 30%); color: #fff; font: 44px/40px "Liberation Serif", serif; text-align: center; letter-spacing: -2.5px; }
.ebsco-bottom { color: #0fa44e; font: 700 19px/22px "Liberation Sans", sans-serif; letter-spacing: 6px; transform: scaleX(1.6); }

/* annotation layer */
.annotations { position: absolute; left: 0; top: 0; pointer-events: none; filter: drop-shadow(1px 2px 1px rgba(0,0,0,.22)); }
```
